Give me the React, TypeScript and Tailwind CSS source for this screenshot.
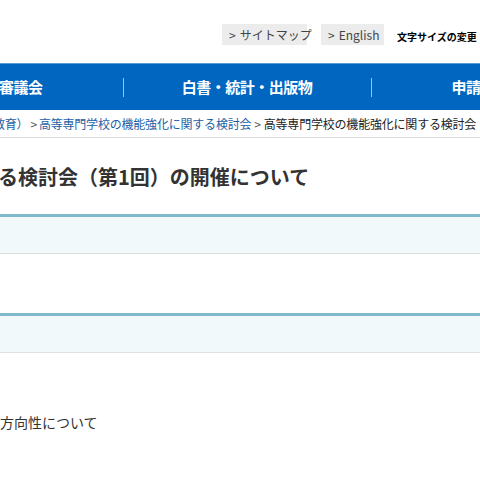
import React from 'react';

const jp = { fontFamily: '"Noto Sans CJK JP", "Noto Sans", sans-serif' };

function TopLinks() {
    return (
        <div className="h-[63px] flex items-start pt-[24px] text-[12px] text-[#444] whitespace-nowrap">
            <div className="ml-[222px] w-[85px] shrink-0 h-[21px] bg-[#ececec] flex items-center pl-[7px]">
                <span className="mr-[4px]">&gt;</span>サイトマップ
            </div>
            <div className="ml-[14px] w-[63px] shrink-0 h-[21px] bg-[#ececec] flex items-center pl-[7px]">
                <span className="mr-[4px]">&gt;</span>English
            </div>
            <div className="ml-[13px] shrink-0 h-[21px] flex items-center pt-[3px] text-[10px] font-bold text-black">
                文字サイズの変更
            </div>
        </div>
    );
}

function NavBar() {
    const items = ['政策・審議会', '白書・統計・出版物', '申請・手続き'];
    return (
        <div className="h-[47px] bg-[#0066bf] border-t border-[#5a9ad6] overflow-hidden">
            <div className="flex h-full ml-[-125px]">
                {items.map((label, i) => (
                    <div key={label} className="w-[248px] shrink-0 flex items-center justify-center relative">
                        {i > 0 && <div className="absolute left-0 top-[14px] h-[19px] w-px bg-[#9cc3ea]" />}
                        <span className="text-white text-[15px] font-bold whitespace-nowrap tracking-[-0.5px]">{label}</span>
                    </div>
                ))}
            </div>
        </div>
    );
}

function Breadcrumb() {
    return (
        <div className="h-[28px] border-b border-[#dddddd] flex items-center text-[12px] tracking-[-0.2px] whitespace-nowrap overflow-hidden">
            <span className="ml-[-7px] text-[#1d5fa6]">教育）</span>
            <span className="mx-[2px] text-[#555]">&gt;</span>
            <span className="text-[#1d5fa6]">高等専門学校の機能強化に関する検討会</span>
            <span className="mx-[3px] text-[#555]">&gt;</span>
            <span className="text-[#222]">高等専門学校の機能強化に関する検討会（第1回）の開催について</span>
        </div>
    );
}

function Band() {
    return <div className="h-[40px] border-t-[3px] border-t-[#80b9cc] border-b border-b-[#e0e0e0] bg-[#f1f9fb]" />;
}

export default function App() {
    return (
        <div className="w-[480px] h-[480px] bg-white overflow-hidden" style={jp}>
            <TopLinks />
            <NavBar />
            <Breadcrumb />

            {/* Title */}
            <h1 className="mt-[25px] ml-[-2px] h-[28px] leading-[28px] text-[20px] font-bold text-[#333] whitespace-nowrap">
                る検討会（第1回）の開催について
            </h1>

            <div className="mt-[23px]">
                <Band />
            </div>
            <div className="mt-[59px]">
                <Band />
            </div>

            <p className="mt-[59px] leading-[20px] text-[14px] text-[#333]">方向性について</p>
        </div>
    );
}
